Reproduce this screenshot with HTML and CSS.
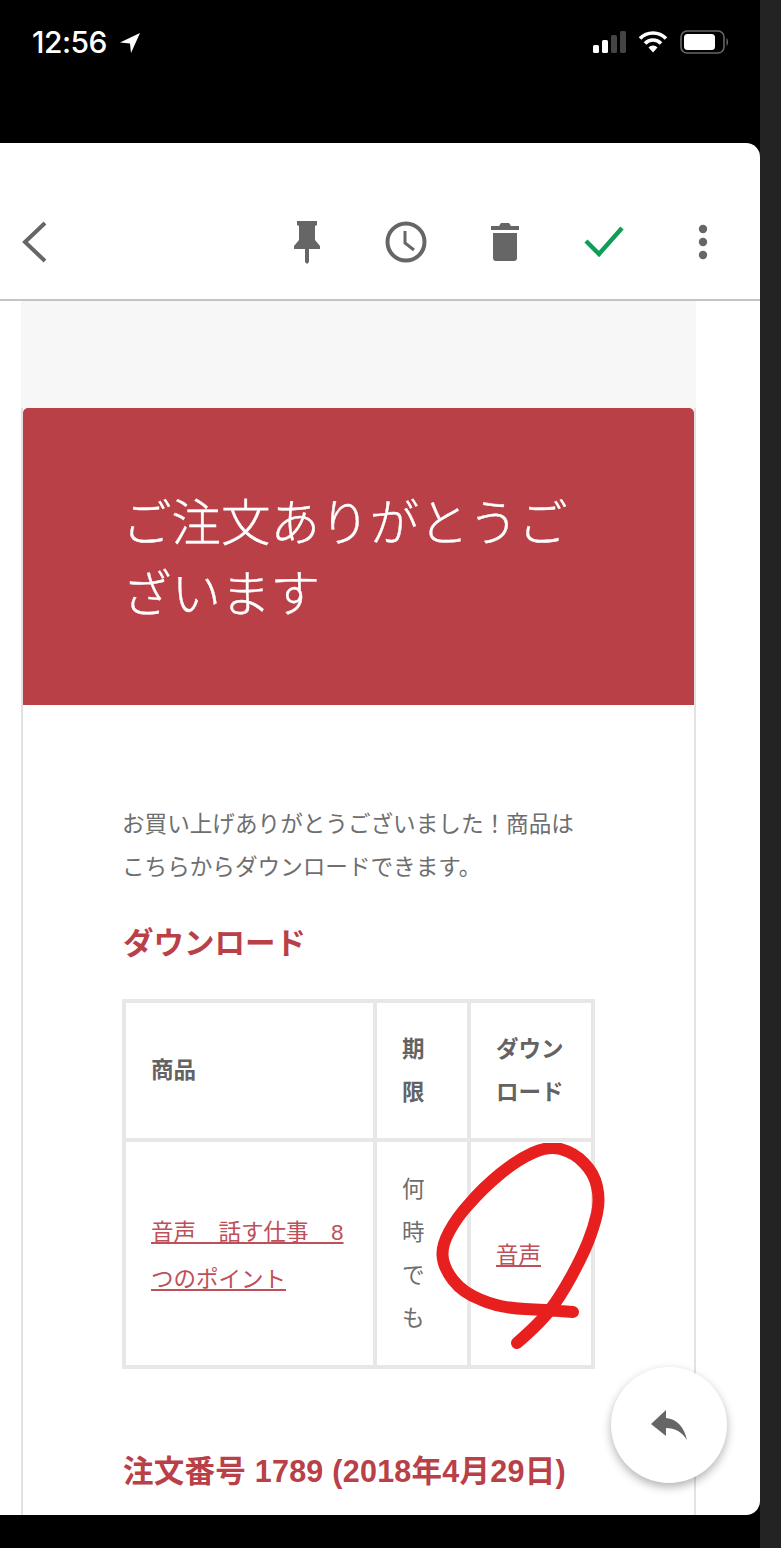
FILE: index.html
```html
<!DOCTYPE html>
<html lang="ja">
<head>
    <meta charset="UTF-8">
    <meta name="viewport" content="width=device-width, initial-scale=1.0">
    <title>ご注文ありがとうございます</title>
    <link rel="stylesheet" href="styles.css">
</head>
<body>
    <div class="screen">
        <div class="status-bar">
            <div class="status-time">
                <span>12:56</span>
                <svg class="nav-arrow" width="22" height="22" viewBox="0 0 22 22"><path d="M21 1 L1 10.5 L11 11.5 L12 21 Z" fill="#fff"/></svg>
            </div>
            <div class="status-icons">
                <svg class="signal" width="36" height="24" viewBox="0 0 36 24">
                    <rect x="1" y="15" width="6" height="8" rx="1.5" fill="#fff"/>
                    <rect x="10" y="10" width="6" height="13" rx="1.5" fill="#fff"/>
                    <rect x="19" y="5" width="6" height="18" rx="1.5" fill="#444"/>
                    <rect x="28" y="1" width="6" height="22" rx="1.5" fill="#444"/>
                </svg>
                <svg width="30" height="24" viewBox="0 0 30 24">
                    <path d="M2 8.5 A18 18 0 0 1 28 8.5" fill="none" stroke="#fff" stroke-width="3.6"/>
                    <path d="M7 13.5 A11 11 0 0 1 23 13.5" fill="none" stroke="#fff" stroke-width="3.6"/>
                    <path d="M10.5 17.5 A6 6 0 0 1 19.5 17.5 L15 22.5 Z" fill="#fff"/>
                </svg>
                <svg width="50" height="24" viewBox="0 0 50 24">
                    <rect x="1" y="1" width="43" height="22" rx="6" fill="none" stroke="#666" stroke-width="1.6"/>
                    <rect x="4" y="4" width="31" height="16" rx="3.5" fill="#fff"/>
                    <path d="M46.5 8 C48.5 9 48.5 15 46.5 16 Z" fill="#666"/>
                </svg>
            </div>
        </div>

        <div class="card">
            <div class="toolbar">
                <svg class="back" width="26" height="42" viewBox="0 0 26 42"><path d="M24 2 L4 21 L24 40" fill="none" stroke="#666" stroke-width="4"/></svg>
                <div class="actions">
                    <span class="action">
                        <svg width="28" height="44" viewBox="0 0 28 44"><path d="M4 1 H24 V5 L22 6 V20 L27 26 V29 H16 V42 L14 44 L12 42 V29 H1 V26 L6 20 V6 L4 5 Z" fill="#666"/></svg>
                    </span>
                    <span class="action">
                        <svg width="42" height="42" viewBox="0 0 42 42">
                            <circle cx="21" cy="21" r="18.5" fill="none" stroke="#666" stroke-width="4"/>
                            <path d="M20 10 V22 L29 29" fill="none" stroke="#666" stroke-width="3"/>
                        </svg>
                    </span>
                    <span class="action">
                        <svg width="30" height="40" viewBox="0 0 30 40"><path d="M1 4 H9 L11 1 H19 L21 4 H29 V8 H1 Z M3 11 H27 V36 Q27 39 24 39 H6 Q3 39 3 36 Z" fill="#666"/></svg>
                    </span>
                    <span class="action">
                        <svg width="40" height="32" viewBox="0 0 40 32"><path d="M2 15 L15 28 L38 2" fill="none" stroke="#0f9d58" stroke-width="4.4"/></svg>
                    </span>
                    <span class="action">
                        <svg width="10" height="36" viewBox="0 0 10 36">
                            <circle cx="5" cy="5" r="4.2" fill="#666"/>
                            <circle cx="5" cy="18" r="4.2" fill="#666"/>
                            <circle cx="5" cy="31" r="4.2" fill="#666"/>
                        </svg>
                    </span>
                </div>
            </div>

            <div class="mail">
                <div class="mail-top"></div>
                <div class="mail-box">
                    <div class="mail-header">
                        <h1>ご注文ありがとうございます</h1>
                    </div>
                    <div class="mail-body">
                        <p class="intro">お買い上げありがとうございました！商品はこちらからダウンロードできます。</p>
                        <h2>ダウンロード</h2>
                        <table class="downloads">
                            <colgroup>
                                <col class="col-item">
                                <col class="col-limit">
                                <col class="col-link">
                            </colgroup>
                            <tr class="head-row">
                                <th>商品</th>
                                <th>期限</th>
                                <th>ダウンロード</th>
                            </tr>
                            <tr class="item-row">
                                <td class="item-name link-cell"><a href="#">音声　話す仕事　8つのポイント</a></td>
                                <td>何時でも</td>
                                <td class="link-cell"><a href="#">音声</a></td>
                            </tr>
                        </table>
                        <h2 class="order-no">注文番号 1789 (2018年4月29日)</h2>
                    </div>
                </div>
            </div>

            <div class="fab">
                <svg width="38" height="32" viewBox="0 0 38 32"><path d="M16 9 V1 L1 15 L16 27 V19 C25 19 32 23 37 31 C34 18 27 10 16 9 Z" fill="#666"/></svg>
            </div>

            <!-- red marker drawn over the screenshot -->
            <svg class="scribble" width="180" height="220" viewBox="0 0 180 220">
                <path d="M144 169 Q121 167 96 166 Q71 165 52.5 157 Q34 150 24 137 Q14 124 13.5 112 Q13 102 20 89 Q28 74 41 60 Q54 45 71 31 Q88 17 103.5 10 Q119 3 131.5 6 Q146 10 155 20 Q165 30 168 43.5 Q171 57 168 70.5 Q165 84 159 99 Q153 114 142 134 Q131 154 121 167 Q111 180 88 200" fill="none" stroke="#e81f1f" stroke-width="12" stroke-linecap="round" stroke-linejoin="round"/>
            </svg>
        </div>
        <div class="bottom-bar"></div>
    </div>
    <div class="side-strip"></div>
</body>
</html>
```

FILE: styles.css
```css
* {
    box-sizing: border-box;
}

body {
    font-family: "Liberation Sans", "Noto Sans CJK JP", sans-serif;
    margin: 0;
    width: 781px;
    height: 1548px;
    overflow: hidden;
    background: #000;
    display: flex;
    color: #666;
}

.screen {
    width: 760px;
    display: flex;
    flex-direction: column;
}

.side-strip {
    flex: 1;
    background: #232323;
}

.status-bar {
    height: 143px;
    flex-shrink: 0;
    background: #000;
    padding: 25px 30px 0 32px;
    display: flex;
    justify-content: space-between;
    align-items: flex-start;
}

.status-time {
    display: flex;
    align-items: center;
    gap: 12px;
    color: #fff;
    font-family: Inter, sans-serif;
    font-size: 30px;
    font-weight: 500;
    line-height: 34px;
    letter-spacing: -0.5px;
}

.nav-arrow {
    margin-top: 2px;
}

.status-icons {
    display: flex;
    align-items: center;
    gap: 12px;
    height: 34px;
}

.signal {
    margin-right: -2px;
}

.card {
    position: relative;
    height: 1372px;
    flex-shrink: 0;
    background: #fff;
    border-radius: 0 14px 14px 0;
    overflow: hidden;
}

.toolbar {
    height: 158px;
    padding: 41px 8px 0 21px;
    display: flex;
    align-items: center;
    border-bottom: 2px solid #c4c4c4;
}

.actions {
    margin-left: auto;
    display: flex;
    align-items: center;
}

.action {
    width: 99px;
    display: flex;
    justify-content: center;
    align-items: center;
}

.mail {
    margin-left: 21px;
    width: 675px;
    height: 1214px;
    display: flex;
    flex-direction: column;
}

.mail-top {
    height: 107px;
    flex-shrink: 0;
    background: #f7f7f7;
}

.mail-box {
    flex: 1;
    border: solid #e2e2e2;
    border-width: 0 2px;
}

.mail-header {
    height: 297px;
    padding: 80px 100px 0 99px;
    background: #b94047;
    border-radius: 5px 5px 0 0;
}

h1 {
    margin: 0;
    color: #fff;
    font-size: 49.5px;
    font-weight: 300;
    -webkit-text-stroke: 0.4px #fff;
    line-height: 71px;
}

.mail-body {
    padding: 98px 60px 0 99px;
}

.intro {
    margin: 0;
    width: 465px;
    font-size: 22.6px;
    line-height: 43px;
    color: #6e6e6e;
}

h2 {
    margin: 32px 0 0;
    padding-left: 1px;
    color: #b94047;
    font-size: 30.5px;
    font-weight: 700;
    line-height: 44px;
}

.downloads {
    width: 469px;
    margin-top: 34px;
    border-collapse: collapse;
    table-layout: fixed;
    font-size: 22.5px;
    line-height: 43px;
    color: #6e6e6e;
}

.col-item {
    width: 251px;
}

.col-limit {
    width: 94px;
}

.col-link {
    width: 124px;
}

.downloads th,
.downloads td {
    border: 4px solid #e7e7e7;
    padding: 0 25px;
    text-align: left;
    word-break: break-all;
}

.downloads th {
    font-weight: 700;
    color: #636363;
}

.downloads .link-cell {
    padding-top: 4px;
}

.downloads .item-name {
    line-height: 47px;
}

.head-row {
    height: 139px;
}

.item-row {
    height: 227px;
}

.downloads a {
    color: #bd5058;
    text-decoration: underline;
}

.order-no {
    margin-top: 80px;
    letter-spacing: 0.25px;
}

.fab {
    position: absolute;
    left: 611px;
    top: 1224px;
    width: 116px;
    height: 116px;
    border-radius: 50%;
    background: #fff;
    box-shadow: 0 4px 10px rgba(0, 0, 0, 0.3);
    display: flex;
    align-items: center;
    justify-content: center;
}

.scribble {
    position: absolute;
    left: 429px;
    top: 1000px;
}

.bottom-bar {
    flex: 1;
    background: #000;
}
```
